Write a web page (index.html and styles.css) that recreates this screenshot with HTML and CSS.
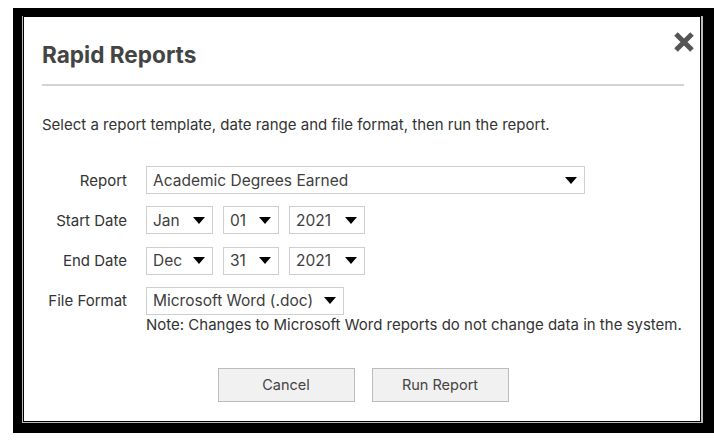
FILE: index.html
```html
<!DOCTYPE html>
<html lang="en">
<head>
    <meta charset="UTF-8">
    <meta name="viewport" content="width=device-width, initial-scale=1.0">
    <title>Rapid Reports</title>
    <link rel="stylesheet" href="styles.css">
</head>
<body>
    <div class="frame">
        <div class="gap">
            <div class="dialog">
                <div class="close">
                    <svg width="22" height="20" viewBox="0 0 22 20">
                        <path d="M3 2 L19 18 M19 2 L3 18" stroke="#555" stroke-width="5" stroke-linecap="butt"/>
                    </svg>
                </div>
                <h1 class="title">Rapid Reports</h1>
                <div class="rule"></div>
                <p class="intro">Select a report template, date range and file format, then run the report.</p>

                <div class="form">
                    <div class="label">Report</div>
                    <div class="field">
                        <div class="select w-report"><span>Academic Degrees Earned</span><i class="arrow"></i></div>
                    </div>

                    <div class="label">Start Date</div>
                    <div class="field">
                        <div class="select w-month"><span>Jan</span><i class="arrow"></i></div>
                        <div class="select w-day"><span>01</span><i class="arrow"></i></div>
                        <div class="select w-year"><span>2021</span><i class="arrow"></i></div>
                    </div>

                    <div class="label">End Date</div>
                    <div class="field">
                        <div class="select w-month"><span>Dec</span><i class="arrow"></i></div>
                        <div class="select w-day"><span>31</span><i class="arrow"></i></div>
                        <div class="select w-year"><span>2021</span><i class="arrow"></i></div>
                    </div>

                    <div class="label">File Format</div>
                    <div class="field">
                        <div class="select w-format"><span>Microsoft Word (.doc)</span><i class="arrow"></i></div>
                    </div>
                </div>
                <p class="note">Note: Changes to Microsoft Word reports do not change data in the system.</p>

                <div class="buttons">
                    <div class="btn">Cancel</div>
                    <div class="btn">Run Report</div>
                </div>
            </div>
        </div>
    </div>
</body>
</html>
```

FILE: styles.css
```css
*{
    margin: 0;
    padding: 0;
    box-sizing: border-box;
}

body{
    background: #fff;
    font-family: Inter, "Liberation Sans", sans-serif;
    color: #333;
    font-size: 15px;
}

.frame{
    width: 701px;
    height: 425px;
    margin: 8px 0 0 13px;
    padding: 8px 11px 10px 9px;
    background: #000;
}

.gap{
    height: 100%;
    padding: 0 2px 1px 1px;
    background: #bdbdbd;
}

.dialog{
    position: relative;
    height: 100%;
    border: 1px solid #000;
    background: #fff;
    padding: 0 16px 0 18px;
}

.close{
    position: absolute;
    top: 15px;
    right: 5px;
    width: 22px;
    height: 20px;
}

.close svg{
    display: block;
}

.title{
    padding-top: 24px;
    font-size: 22.6px;
    line-height: 28px;
    font-weight: 700;
    color: #444;
}

.rule{
    margin-top: 15px;
    height: 2px;
    background: #d4d4d4;
}

.intro{
    margin-top: 29px;
    line-height: 20px;
}

.form{
    margin-top: 31px;
    display: grid;
    grid-template-columns: 85px auto;
    column-gap: 19px;
    row-gap: 12.3px;
    align-items: center;
}

.label{
    text-align: right;
}

.field{
    display: flex;
    gap: 10px;
}

.select{
    height: 28px;
    display: flex;
    align-items: center;
    justify-content: space-between;
    padding: 0 7px 0 6px;
    border: 1px solid #cfcfcf;
    background: #fff;
    color: #3e3e3e;
    font-size: 15.5px;
}

.arrow{
    width: 0;
    height: 0;
    border-left: 6px solid transparent;
    border-right: 6px solid transparent;
    border-top: 7px solid #000;
}

.w-report{ width: 439px; }
.w-month{ width: 67px; }
.w-day{ width: 56px; }
.w-year{ width: 76px; }
.w-format{ width: 198px; }

.note{
    margin-left: 104px;
    line-height: 20px;
}

.buttons{
    margin-top: 33px;
    display: flex;
    justify-content: center;
    gap: 17px;
}

.btn{
    width: 137px;
    height: 34px;
    display: flex;
    align-items: center;
    justify-content: center;
    background: #f1f1f1;
    border: 1px solid #bcbcbc;
    color: #444;
    font-size: 14.5px;
}
```
